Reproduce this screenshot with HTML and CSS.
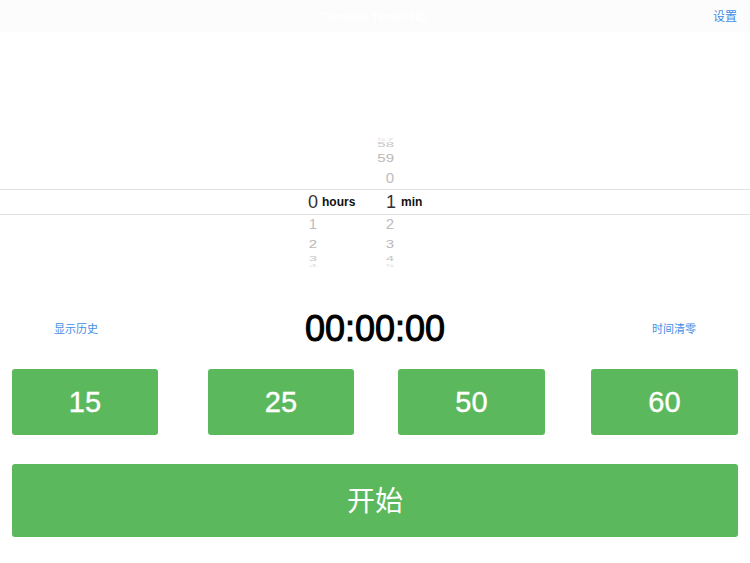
FILE: index.html
```html
<!DOCTYPE html>
<html lang="zh">
<head>
<meta charset="utf-8">
<title>Tomato Timer</title>
<link rel="stylesheet" href="styles.css">
</head>
<body>
<div class="app">
  <header class="nav">
    <span class="nav-title">Tomato Timer HD</span>
    <a class="link nav-action">设置</a>
  </header>
  <section class="picker">
    <div class="band"></div>
    <div class="wheels">
      <div class="wheel wheel-hours">
        <div class="row r-h4"></div><div class="row r-h3"></div><div class="row r-h2"></div><div class="row r-h1"></div>
        <div class="row current"><span class="num">0</span><span class="unit">hours</span></div>
        <div class="row r-h1"><span class="num">1</span></div>
        <div class="row r-h2"><span class="num">2</span></div>
        <div class="row r-h3"><span class="num">3</span></div>
        <div class="row r-h4"><span class="num">4</span></div>
      </div>
      <div class="wheel wheel-min">
        <div class="row r-h4"><span class="num">57</span></div>
        <div class="row r-h3"><span class="num">58</span></div>
        <div class="row r-h2"><span class="num">59</span></div>
        <div class="row r-h1"><span class="num">0</span></div>
        <div class="row current"><span class="num">1</span><span class="unit">min</span></div>
        <div class="row r-h1"><span class="num">2</span></div>
        <div class="row r-h2"><span class="num">3</span></div>
        <div class="row r-h3"><span class="num">4</span></div>
        <div class="row r-h4"><span class="num">5</span></div>
      </div>
    </div>
  </section>
  <section class="status">
    <a class="link side">显示历史</a>
    <div class="clock">00:00:00</div>
    <a class="link side">时间清零</a>
  </section>
  <section class="presets">
    <button class="btn preset p1">15</button>
    <button class="btn preset p2">25</button>
    <button class="btn preset p3">50</button>
    <button class="btn preset p4">60</button>
  </section>
  <button class="btn start">开始</button>
</div>
</body>
</html>
```
FILE: styles.css
```css
* { box-sizing: border-box; }
html, body { margin: 0; padding: 0; background: #fff; }
body { font-family: "Liberation Sans", "Noto Sans CJK SC", sans-serif; }
.app { width: 750px; height: 563px; overflow: hidden; display: flex; flex-direction: column; }
.nav { height: 32px; flex: none; background: #fcfcfc; display: flex; align-items: center; justify-content: center; position: relative; }
.nav-title { color: #fff; font-size: 13px; font-weight: 700; }
.nav-action { position: absolute; right: 13px; top: 8px; font-size: 12px; line-height: 16px; }
.link { color: #3f8ee6; font-family: "Noto Sans CJK SC", sans-serif; }
.picker { height: 238px; flex: none; padding-top: 105px; position: relative; }
.band { position: absolute; left: 0; right: 0; top: 157px; height: 26px; border-top: 1px solid #e2e2e2; border-bottom: 1px solid #e2e2e2; }
.wheels { display: flex; position: relative; padding-left: 288px; }
.wheel { display: flex; flex-direction: column; }
.wheel-hours { width: 78px; }
.row { display: flex; align-items: center; white-space: nowrap; }
.num { display: block; width: 30px; text-align: right; }
.unit { margin-left: 4px; font-size: 12px; font-weight: 700; color: #111; }
.wheel-min .unit { margin-left: 5px; }
.current { height: 26px; font-size: 18px; color: #333; }
.r-h1 { height: 20px; padding-bottom: 4px; font-size: 15px; color: #bdbdbd; }
.r-h2 { height: 20px; padding-bottom: 4px; font-size: 15px; color: #b8b8b8; }
.r-h2 .num { transform: scaleY(.75); }
.r-h3 { height: 8px; padding-bottom: 2px; font-size: 15px; color: #c6c6c6; }
.r-h3 .num { transform: scaleY(.45); }
.r-h4 { height: 4px; font-size: 15px; color: #e0e0e0; }
.r-h4 .num { transform: scaleY(.2); }
.wheel-hours .r-h1 .num, .wheel-hours .r-h2 .num, .wheel-hours .r-h3 .num, .wheel-hours .r-h4 .num { width: 29px; }
.wheel-min .r-h1 .num, .wheel-min .r-h2 .num, .wheel-min .r-h3 .num, .wheel-min .r-h4 .num { width: 28px; }
.status { height: 99px; flex: none; padding: 19px 54px 0; display: flex; align-items: center; justify-content: space-between; }
.side { font-size: 11px; width: 44px; white-space: nowrap; margin-top: -2px; }
.clock { font-size: 36px; color: #000; line-height: 40px; -webkit-text-stroke: 1px #000; }
.presets { height: 66px; flex: none; padding: 0 12px; display: flex; }
.btn { border: 0; background: #5cb85c; color: #fff; border-radius: 3px; padding: 0; font-family: "Liberation Sans", "Noto Sans CJK SC", sans-serif; }
.preset { height: 66px; font-size: 29px; width: 146px; -webkit-text-stroke: .4px #fff; }
.p2 { margin-left: 50px; }
.p3 { margin-left: 44px; width: 147px; }
.p4 { margin-left: 46px; width: 147px; }
.start { width: 726px; height: 73px; margin: 29px 12px 0; padding-bottom: 4px; font-size: 28px; font-family: "Noto Sans CJK SC", sans-serif; font-weight: 400; flex: none; }
```
